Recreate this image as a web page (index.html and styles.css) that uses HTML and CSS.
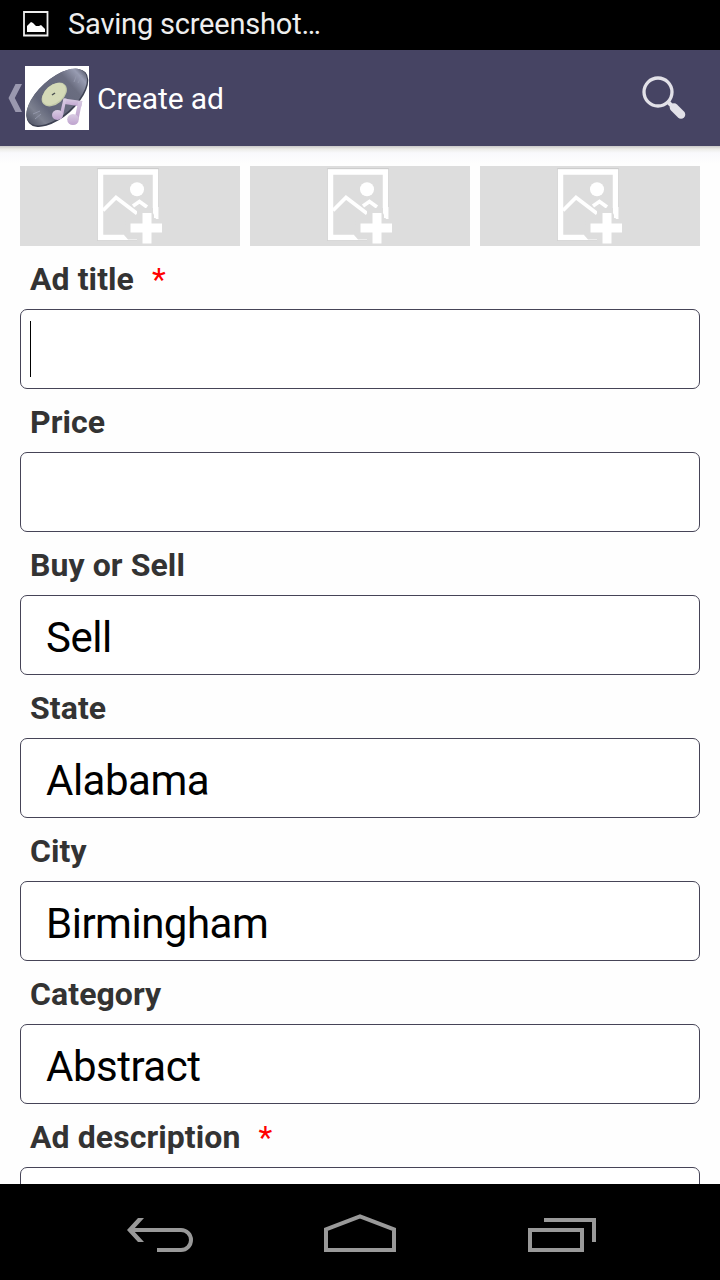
FILE: index.html
```html
<!DOCTYPE html>
<html lang="en">
  <head>
    <meta charset="utf-8">
    <title>Create ad</title>
    <link rel="stylesheet" href="styles.css">
  </head>

  <body>
    <!-- one drawing shared by the three photo slots -->
    <svg class="symbols" aria-hidden="true">
      <symbol id="add-photo" viewBox="0 0 68 80">
        <path d="M3.500 2.500h61v72h-61z" fill="none" stroke="#cdcdcd" stroke-width="1"/>
        <path d="M6.500 6h55v65.500h-55z" fill="none" stroke="#fff" stroke-width="5.500"/>
        <path d="M9 44.500L22 31.500L43 47.500M39 40L45.500 35.500L53 41" fill="none" stroke="#fff" stroke-width="3.800"/>
        <circle cx="43" cy="23.300" r="7"/>
        <path d="M43 42h17v10h10v28H43v-6.500H34l-4-4.500 2-15h11z" fill="#ddd"/>
        <path d="M59 41h5.500v12H62l-3-6z"/>
        <path d="M48 47h9v10.500h12v9H57v11h-9v-11H36v-9h12z" transform="translate(.5 0)"/>
      </symbol>
    </svg>

    <div class="screen">
      <div class="status-bar">
        <svg class="shot-icon" width="26" height="26" viewBox="0 0 26 26">
          <path d="M1 1h23.500v23.500H1z" fill="none" stroke="#eee" stroke-width="1.800"/>
          <path d="M4 21v-6l2-2 2-2 2 1 3 3 3 0 2-1 4 4v3z" fill="#fff"/>
        </svg>
        <span>Saving screenshot…</span>
      </div>

      <header class="action-bar">
        <svg class="up" width="14" height="28" viewBox="0 0 14 28">
          <path d="M7.500 0H14L6.800 14 14 28H7.500L0.500 14z" fill="#9a98af"/>
        </svg>
        <svg class="logo" width="64" height="64" viewBox="0 0 64 64">
          <defs>
            <linearGradient id="vinyl" x1="0" y1="0" x2="1" y2="0">
              <stop offset="0" stop-color="#55596a"/>
              <stop offset=".15" stop-color="#7d8190"/>
              <stop offset=".3" stop-color="#62667a"/>
              <stop offset=".75" stop-color="#6a6d80"/>
              <stop offset=".92" stop-color="#989cb2"/>
              <stop offset="1" stop-color="#66697b"/>
            </linearGradient>
            <linearGradient id="note" x1="0" y1="0" x2="0" y2="1">
              <stop offset="0" stop-color="#d9cde3"/>
              <stop offset="1" stop-color="#bfa3cf"/>
            </linearGradient>
          </defs>
          <rect width="64" height="64" fill="#fff"/>
          <ellipse cx="32.300" cy="31.800" rx="38" ry="19" transform="rotate(-42 32.300 31.800)" fill="#3d4152"/>
          <ellipse cx="31.700" cy="31" rx="37.300" ry="18.300" transform="rotate(-42 31.700 31)" fill="url(#vinyl)"/>
          <path d="M52 8l-3 8M57 9l-4 8M8 48l7-3M10 53l6-5" fill="none" stroke="#9296aa" stroke-width="1"/>
          <ellipse cx="29.300" cy="28.500" rx="14.500" ry="9.500" transform="rotate(-41 29.300 28.500)" fill="#c3caa9"/>
          <ellipse cx="29" cy="28" rx="13.500" ry="8.700" transform="rotate(-41 29 28)" fill="#d5dab8"/>
          <path d="M27 29l3-2" stroke="#4b4f51" stroke-width="1.500"/>
          <!-- beamed notes: beam, stems, heads -->
          <g fill="url(#note)">
            <path d="M38.500 32.500l18.800 2.500-1 5.500L39.500 38z"/>
            <path d="M38.500 32.500h3L38.200 49h-3.500zM53.300 35h4L53.500 53.500h-4z"/>
            <ellipse cx="32.500" cy="49" rx="5.500" ry="5"/>
            <ellipse cx="48" cy="53.500" rx="5.800" ry="5.500"/>
          </g>
        </svg>
        <h1>Create ad</h1>
        <svg class="search" width="46" height="46" viewBox="0 0 46 46">
          <circle cx="17" cy="17" r="14" fill="none" stroke="#e2e1e8" stroke-width="3.300"/>
          <path d="M26.500 26.500l5 5" stroke="#e2e1e8" stroke-width="4"/>
          <path d="M33 32.500l7 7" stroke="#e2e1e8" stroke-width="8.500" stroke-linecap="round"/>
        </svg>
      </header>

      <main class="content">
        <div class="photos">
          <div class="photo"><svg width="68" height="80"><use href="#add-photo"/></svg></div>
          <div class="photo"><svg width="68" height="80"><use href="#add-photo"/></svg></div>
          <div class="photo"><svg width="68" height="80"><use href="#add-photo"/></svg></div>
        </div>

        <div class="label">Ad title <span class="required">*</span></div>
        <div class="field focused"><span class="caret"></span></div>
        <div class="label">Price</div>
        <div class="field"></div>
        <div class="label">Buy or Sell</div>
        <div class="field">Sell</div>
        <div class="label">State</div>
        <div class="field">Alabama</div>
        <div class="label">City</div>
        <div class="field">Birmingham</div>
        <div class="label">Category</div>
        <div class="field">Abstract</div>
        <div class="label">Ad description <span class="required">*</span></div>
        <div class="field"></div>
      </main>

      <nav class="nav-bar">
        <svg width="72" height="40" viewBox="0 0 72 40">
          <path d="M8 12h51a10 10 0 0 1 0 20H35" fill="none" stroke="#999" stroke-width="4"/>
          <path d="M16 0h6L11 12l11 12h-6L5 12z" fill="#999"/>
        </svg>
        <svg width="72" height="40" viewBox="0 0 72 40">
          <path d="M2 32V11.300L36 -1.700L70 11.300V32z" fill="none" stroke="#999" stroke-width="4"/>
        </svg>
        <svg width="72" height="40" viewBox="0 0 72 40">
          <path d="M4 12h52v20H4zM18 2h50v22" fill="none" stroke="#999" stroke-width="4"/>
        </svg>
      </nav>
    </div>
  </body>
</html>
```
FILE: styles.css
```css
* {
  box-sizing: border-box;
}

body {
  margin: 0;
  font-family: Roboto, sans-serif;
  color: #000;
  background: #fff;
}

svg {
  display: block;
  flex: none;
  overflow: visible;
}

.symbols {
  position: absolute;
  width: 0;
  height: 0;
}

.logo {
  overflow: hidden;
}

.screen {
  display: flex;
  flex-direction: column;
  width: 720px;
  height: 1280px;
  overflow: hidden;
}

/* top bars */

.status-bar {
  display: flex;
  align-items: center;
  flex: none;
  height: 50px;
  padding: 0 0 3px 23px;
  background: #000;
  color: #eee;
  font-size: 29px;
  letter-spacing: -0.2px;
}

.shot-icon {
  margin-right: 19px;
}

.action-bar {
  display: flex;
  align-items: center;
  flex: none;
  height: 96px;
  padding: 0 33px 0 8px;
  background: #464463;
  color: #fff;
}

.logo {
  margin: 0 8px 0 3px;
}

.action-bar h1 {
  margin: 0;
  font-size: 30px;
  font-weight: 400;
  letter-spacing: -0.15px;
}

.search {
  margin-left: auto;
}

/* form */

.content {
  flex: 1;
  min-height: 0;
  overflow: hidden;
  padding: 20px 20px 0;
  background: linear-gradient(#c9c8c8 0, #ecece8 3px, #f9f9fc 7px, #fefefe 18px);
}

.photos {
  display: flex;
  gap: 10px;
}

.photo {
  flex: 1;
  height: 80px;
  padding-left: 74px;
  background: #ddd;
  fill: #fff;
}

.label {
  height: 63px;
  padding: 2px 10px 0;
  line-height: 63px;
  font-size: 32px;
  font-weight: 700;
  letter-spacing: 0.08px;
  color: #333;
}

.required {
  margin-left: 10px;
  font-weight: 400;
  color: #f00;
}

.field {
  display: flex;
  align-items: center;
  height: 80px;
  padding: 4px 25px 0;
  border: 1px solid #464457;
  border-radius: 7px;
  background: #fff;
  font-size: 42px;
  letter-spacing: -0.5px;
}

.focused {
  padding: 0 9px;
}

.caret {
  width: 1px;
  height: 56px;
  background: #000;
}

/* system navigation */

.nav-bar {
  display: flex;
  justify-content: space-between;
  flex: none;
  height: 96px;
  padding: 34px 122px 0 122px;
  background: #000;
}
```
